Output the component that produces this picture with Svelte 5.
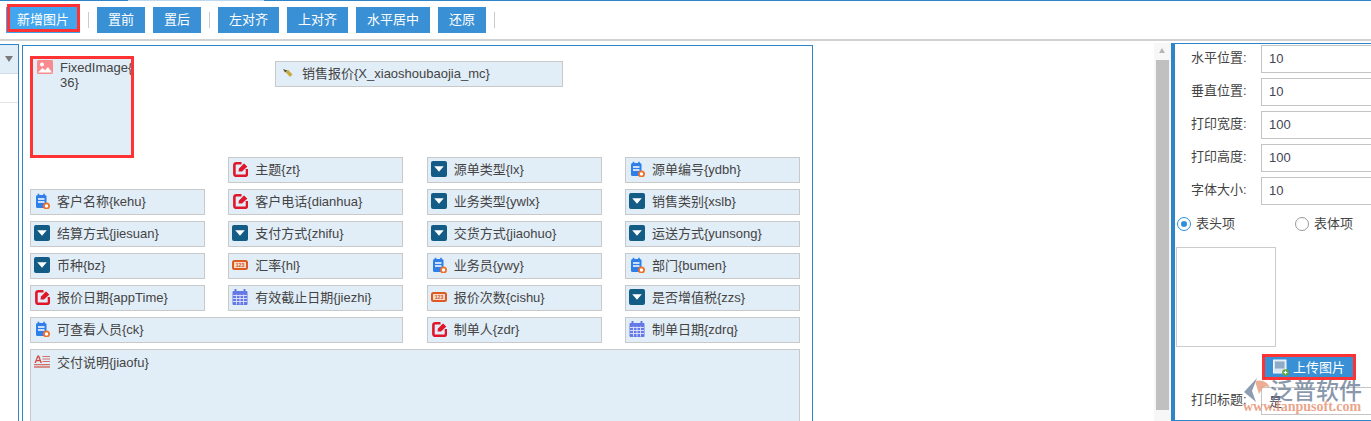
<script>
  const tools = [
    [{ t: '置前' }, { t: '置后' }],
    [{ t: '左对齐' }, { t: '上对齐' }, { t: '水平居中' }, { t: '还原' }]
  ];
  const fields = [
    { i: 'edit', t: '主题{zt}', cls: 'start2' },
    { i: 'drop', t: '源单类型{lx}' },
    { i: 'doc', t: '源单编号{ydbh}' },
    { i: 'doc', t: '客户名称{kehu}' },
    { i: 'edit', t: '客户电话{dianhua}' },
    { i: 'drop', t: '业务类型{ywlx}' },
    { i: 'drop', t: '销售类别{xslb}' },
    { i: 'drop', t: '结算方式{jiesuan}' },
    { i: 'drop', t: '支付方式{zhifu}' },
    { i: 'drop', t: '交货方式{jiaohuo}' },
    { i: 'drop', t: '运送方式{yunsong}' },
    { i: 'drop', t: '币种{bz}' },
    { i: 'money', t: '汇率{hl}' },
    { i: 'doc', t: '业务员{ywy}' },
    { i: 'doc', t: '部门{bumen}' },
    { i: 'edit', t: '报价日期{appTime}' },
    { i: 'cal', t: '有效截止日期{jiezhi}' },
    { i: 'money', t: '报价次数{cishu}' },
    { i: 'drop', t: '是否增值税{zzs}' },
    { i: 'doc', t: '可查看人员{ck}', cls: 'span2' },
    { i: 'edit', t: '制单人{zdr}' },
    { i: 'cal', t: '制单日期{zdrq}' }
  ];
  const props = [
    ['水平位置:', '10'],
    ['垂直位置:', '10'],
    ['打印宽度:', '100'],
    ['打印高度:', '100'],
    ['字体大小:', '10']
  ];
</script>

{#snippet icon(kind)}
  <svg class="ico" width="16" height="16" viewBox="0 0 16 16" aria-hidden="true">
    {#if kind === 'drop'}
      <rect width="16" height="16" rx="2" fill="#135c85" />
      <path d="M3.2 5.2h9.6L8 10.8z" fill="#fff" />
    {:else if kind === 'edit'}
      <path d="M9.5 2.2H4.2a1.8 1.8 0 0 0-1.8 1.8v9a1.8 1.8 0 0 0 1.8 1.8h9a1.8 1.8 0 0 0 1.8-1.8V8" fill="none" stroke="#e0162b" stroke-width="2.6" />
      <path d="M6.5 10.5 7 7.5 12.2 2.2l3.2 3.2L10 10.5z" fill="#e0162b" />
      <path d="M11.8 1.6l3.8 3.8" stroke="#fff" stroke-width=".6" />
    {:else if kind === 'doc'}
      <rect x="2" y="2" width="10.5" height="13" rx="1.6" fill="#2f7fe8" />
      <path d="M4.5 .8v2.6M10 .8v2.6" stroke="#2f7fe8" stroke-width="1.6" />
      <path d="M4 6h6.5M4 9h6.5" stroke="#fff" stroke-width="1.3" />
      <circle cx="12.5" cy="13" r="2.6" fill="#fff" stroke="#f0702a" stroke-width="1.8" />
    {:else if kind === 'money'}
      <rect x="1" y="3.9" width="14" height="8" rx="1.5" fill="#f9dcc8" stroke="#dd5a22" stroke-width="2" />
      <text x="8" y="9.8" text-anchor="middle" font-size="5" font-weight="700" font-family="Liberation Sans" fill="#c8552a">123</text>
    {:else if kind === 'cal'}
      <rect x="0.5" y="2" width="15" height="14" rx="1" fill="#6478e6" />
      <path d="M3.5 0v4M12.5 0v4" stroke="#6478e6" stroke-width="2" />
      <path d="M1 6.5h14M1 9.5h14M1 12.5h14M4.5 5.5v10M8 5.5v10M11.5 5.5v10" stroke="#d6dcfa" stroke-width="1" />
    {:else if kind === 'area'}
      <path d="M.5 9 3.4 1.5h1.7L8 9H6.5L5.9 7.3H2.6L2 9zM3 6h2.4L4.2 3z" fill="#d4483f" />
      <path d="M8.5 2.5H16M8.5 5H16M8.5 7.5H16" stroke="#d4706a" stroke-width="1.2" />
      <path d="M0 10.7H16M0 13H16" stroke="#d4706a" stroke-width="1.3" />
    {:else if kind === 'img'}
      <rect y="0" width="16" height="14" rx="1.5" fill="#f98b8e" />
      <circle cx="5" cy="4.6" r="2" fill="#fff" />
      <path d="M1 12.5 5.5 8l2.5 2.2L11 7l4 5.5z" fill="#fff" />
    {:else if kind === 'tag'}
      <path d="M6.5 7 9 4.8 13.5 9.5 11 12z" fill="#c9a93a" />
      <path d="M4 4 8.4 5.4 6 7.6z" fill="#55543a" />
    {/if}
  </svg>
{/snippet}

<div class="page">
  <div class="topline"></div>
  <header class="toolbar">
    <button class="tbtn primary">新增图片<span class="mark"></span></button>
    {#each tools as group}
      <span class="sep"></span>
      {#each group as b}
        <button class="tbtn">{b.t}</button>
      {/each}
    {/each}
    <span class="sep"></span>
  </header>

  <main class="main">
    <aside class="tree">
      <div class="tree-head"><span class="caret"></span></div>
      <div class="tree-row"></div>
    </aside>

    <section class="canvas">
      <div class="head">
        <div class="field picked">
          {@render icon('img')}
          <span>FixedImage{'{'}<br />36}</span>
        </div>
        <div class="field title">
          {@render icon('tag')}
          <span>销售报价{'{'}X_xiaoshoubaojia_mc}</span>
        </div>
      </div>
      <div class="grid">
        {#each fields as f}
          <div class="field {f.cls ?? ''}">
            {@render icon(f.i)}
            <span>{f.t}</span>
          </div>
        {/each}
        <div class="field area">
          {@render icon('area')}
          <span>交付说明{'{'}jiaofu}</span>
        </div>
      </div>
    </section>

    <div class="spacer"></div>

    <div class="scroll">
      <span class="arrow"></span>
      <div class="thumb"></div>
    </div>

    <aside class="panel">
      {#each props as p}
        <div class="row">
          <label class="lbl" for={p[0]}>{p[0]}</label>
          <input id={p[0]} class="inp" value={p[1]} readonly />
        </div>
      {/each}
      <div class="radios">
        <span class="radio on"></span><span class="rtext first">表头项</span>
        <span class="radio"></span><span class="rtext">表体项</span>
      </div>
      <div class="preview"></div>
      <button class="upload">
        <svg width="16" height="17" viewBox="0 0 16 17" aria-hidden="true">
          <rect x=".5" y="1" width="12.5" height="13" fill="#dbe7f2" stroke="#f2f6fa" />
          <rect x="2" y="2.5" width="9.5" height="7" fill="#8fabc6" />
          <circle cx="12.5" cy="13.5" r="3.3" fill="#5fa53c" />
          <path d="M10.7 13.5h3.6M12.5 11.7v3.6" stroke="#fff" stroke-width="1.2" />
        </svg>
        上传图片
      </button>
      <div class="row last">
        <label class="lbl" for="pt">打印标题:</label>
        <input id="pt" class="inp" value="是" readonly />
      </div>
    </aside>
  </main>

  <div class="watermark">
    <svg class="logo" width="28" height="24" viewBox="0 0 28 24" aria-hidden="true">
      <path d="M1 14 14 0 9 13 13 24z" fill="#71849d" />
      <path d="M12 3c7-2 13 1 15 7-3-2-6-2-8 1l-3 5z" fill="#e89a78" />
    </svg>
    <div class="wm-cn">泛普软件</div>
    <div class="wm-en">www.fanpusoft.com</div>
  </div>
</div>

<style>
  :global(body) {
    margin: 0;
    background: #fff;
  }
  .page {
    position: relative;
    width: 1371px;
    height: 421px;
    overflow: hidden;
    background: #fff;
    color: #444;
    font: 13px "Liberation Sans", "Noto Sans CJK SC", sans-serif;
  }
  .topline {
    height: 1px;
    background: linear-gradient(to right, #2e86c8 128px, #bcd9ef 128px, #bcd9ef 264px, #2e86c8 264px);
  }
  .toolbar {
    height: 40px;
    box-sizing: border-box;
    display: flex;
    align-items: flex-start;
    gap: 8px;
    padding: 6px 0 0 6px;
    border-bottom: 2px solid #d2d2d2;
  }
  .tbtn {
    position: relative;
    height: 26px;
    padding: 0 11px 3px;
    border: 0;
    background: #3a90d4;
    color: #fff;
    font: inherit;
  }
  .primary {
    width: 74px;
    padding: 0 0 3px;
    background: #42a5ee;
  }
  .mark {
    position: absolute;
    left: 1px;
    top: -3px;
    width: 73px;
    height: 28px;
    box-sizing: border-box;
    border: 3px solid #f33;
  }
  .sep {
    width: 1px;
    height: 16px;
    margin-top: 5px;
    background: #ccc;
  }
  .main {
    display: flex;
    height: 380px;
    overflow: hidden;
    align-items: flex-start;
  }
  .tree {
    width: 19px;
    box-sizing: border-box;
    height: 380px;
    margin-top: 3px;
    border-top: 1px solid #2e86c8;
    border-right: 1px solid #2e86c8;
  }
  .tree-head {
    height: 28px;
    background: #e1edf7;
    border-bottom: 1px solid #cfdbe6;
    display: flex;
    align-items: center;
    justify-content: flex-end;
    padding-right: 5px;
  }
  .caret {
    border-style: solid;
    border-width: 6px 4.5px 0;
    border-color: #7a7a7a transparent transparent;
  }
  .tree-row {
    height: 28px;
    border-bottom: 1px solid #e4e4e4;
  }
  .canvas {
    width: 791px;
    height: 420px;
    box-sizing: border-box;
    flex: none;
    margin: 4px 0 0 3px;
    padding: 10px 7px 0;
    border: 1px solid #2e86c8;
  }
  .head {
    height: 101px;
    display: flex;
    align-items: flex-start;
  }
  .field {
    display: flex;
    align-items: center;
    box-sizing: border-box;
    height: 26px;
    padding-left: 3px;
    border: 1px solid #c9c9c9;
    background: #e1edf7;
    white-space: nowrap;
    overflow: hidden;
  }
  .field span {
    margin-top: -3px;
  }
  .ico {
    flex: none;
    margin: -2px 7px 0 0;
  }
  .picked {
    width: 104px;
    height: 102px;
    align-items: flex-start;
    padding: 1px 0 0 4px;
    border: 3px solid #f33;
    line-height: 15px;
  }
  .picked span { margin-top: 0; }
  .picked .ico { margin: 0 7px 0 0; }
  .title {
    width: 288px;
    margin: 5px 0 0 141px;
  }
  .grid {
    display: grid;
    grid-template-columns: repeat(4, 175px);
    grid-auto-rows: 26px;
    column-gap: 23.34px;
    row-gap: 6px;
  }
  .start2 { grid-column-start: 2; }
  .span2 { grid-column: span 2; }
  .area {
    grid-column: 1 / -1;
    height: 90px;
    align-items: flex-start;
    padding-top: 4px;
  }
  .area span { margin-top: -2px; }
  .area .ico { margin-top: 0; }
  .spacer { flex: 1; }
  .scroll {
    position: relative;
    flex: none;
    width: 17px;
    height: 378px;
    margin-top: 2px;
    background: #f7f7f7;
  }
  .arrow {
    position: absolute;
    left: 5px;
    top: 5px;
    border-style: solid;
    border-width: 0 3.5px 5px;
    border-color: transparent transparent #b5b5b5;
  }
  .thumb {
    position: absolute;
    left: 2px;
    top: 17px;
    width: 13px;
    height: 350px;
    background: #c0c0c0;
  }
  .panel {
    flex: none;
    width: 200px;
    height: 378px;
    box-sizing: border-box;
    margin-top: 2px;
    padding-top: 1px;
    border-top: 1px solid #2e86c8;
    border-left: 4px solid #2e86c8;
    border-bottom: 1px solid #2e86c8;
    overflow: hidden;
  }
  .row {
    display: flex;
    align-items: center;
    height: 28px;
    margin-bottom: 5px;
    padding-left: 16px;
  }
  .lbl {
    width: 70px;
    flex: none;
    margin-top: -6px;
  }
  .inp {
    flex: none;
    width: 140px;
    height: 28px;
    box-sizing: border-box;
    padding: 0 7px 2px;
    border: 1px solid #c4c4c4;
    outline: 0;
    background: transparent;
    color: #445;
    font: inherit;
  }
  .radios {
    display: flex;
    align-items: center;
    height: 16px;
    margin: 11px 0 0 2px;
  }
  .radio {
    position: relative;
    width: 14px;
    height: 14px;
    box-sizing: border-box;
    border: 1px solid #999;
    border-radius: 50%;
    background: #fff;
  }
  .radio.on { border-color: #2f8fdc; }
  .radio.on::after {
    content: "";
    position: absolute;
    inset: 3px;
    border-radius: 50%;
    background: #2f8fdc;
  }
  .rtext {
    margin-left: 5px;
    margin-top: -4px;
  }
  .rtext.first { margin-right: 60px; }
  .preview {
    width: 100px;
    height: 100px;
    box-sizing: border-box;
    margin: 15px 0 0 1px;
    border: 1px solid #ccc;
  }
  .upload {
    display: flex;
    align-items: center;
    justify-content: center;
    gap: 4px;
    width: 94px;
    height: 26px;
    box-sizing: border-box;
    margin: 7px 0 7px 87px;
    padding: 0 0 2px;
    border: 3px solid #f33;
    background: #3a90d4;
    color: #fff;
    font: inherit;
  }
  .upload svg { margin-top: 2px; }
  .watermark {
    position: absolute;
    left: 1242px;
    top: 377px;
    width: 125px;
    height: 40px;
    pointer-events: none;
  }
  .logo {
    position: absolute;
    left: 1px;
    top: 1px;
    opacity: .8;
  }
  .wm-cn {
    position: absolute;
    left: 28px;
    top: 0;
    font-size: 23px;
    font-weight: 500;
    line-height: 28px;
    color: rgba(106, 124, 150, .8);
    white-space: nowrap;
  }
  .wm-en {
    position: absolute;
    left: 1px;
    top: 21px;
    font: 700 14px/18px "Liberation Serif", serif;
    color: rgba(228, 140, 108, .8);
    white-space: nowrap;
  }
</style>
